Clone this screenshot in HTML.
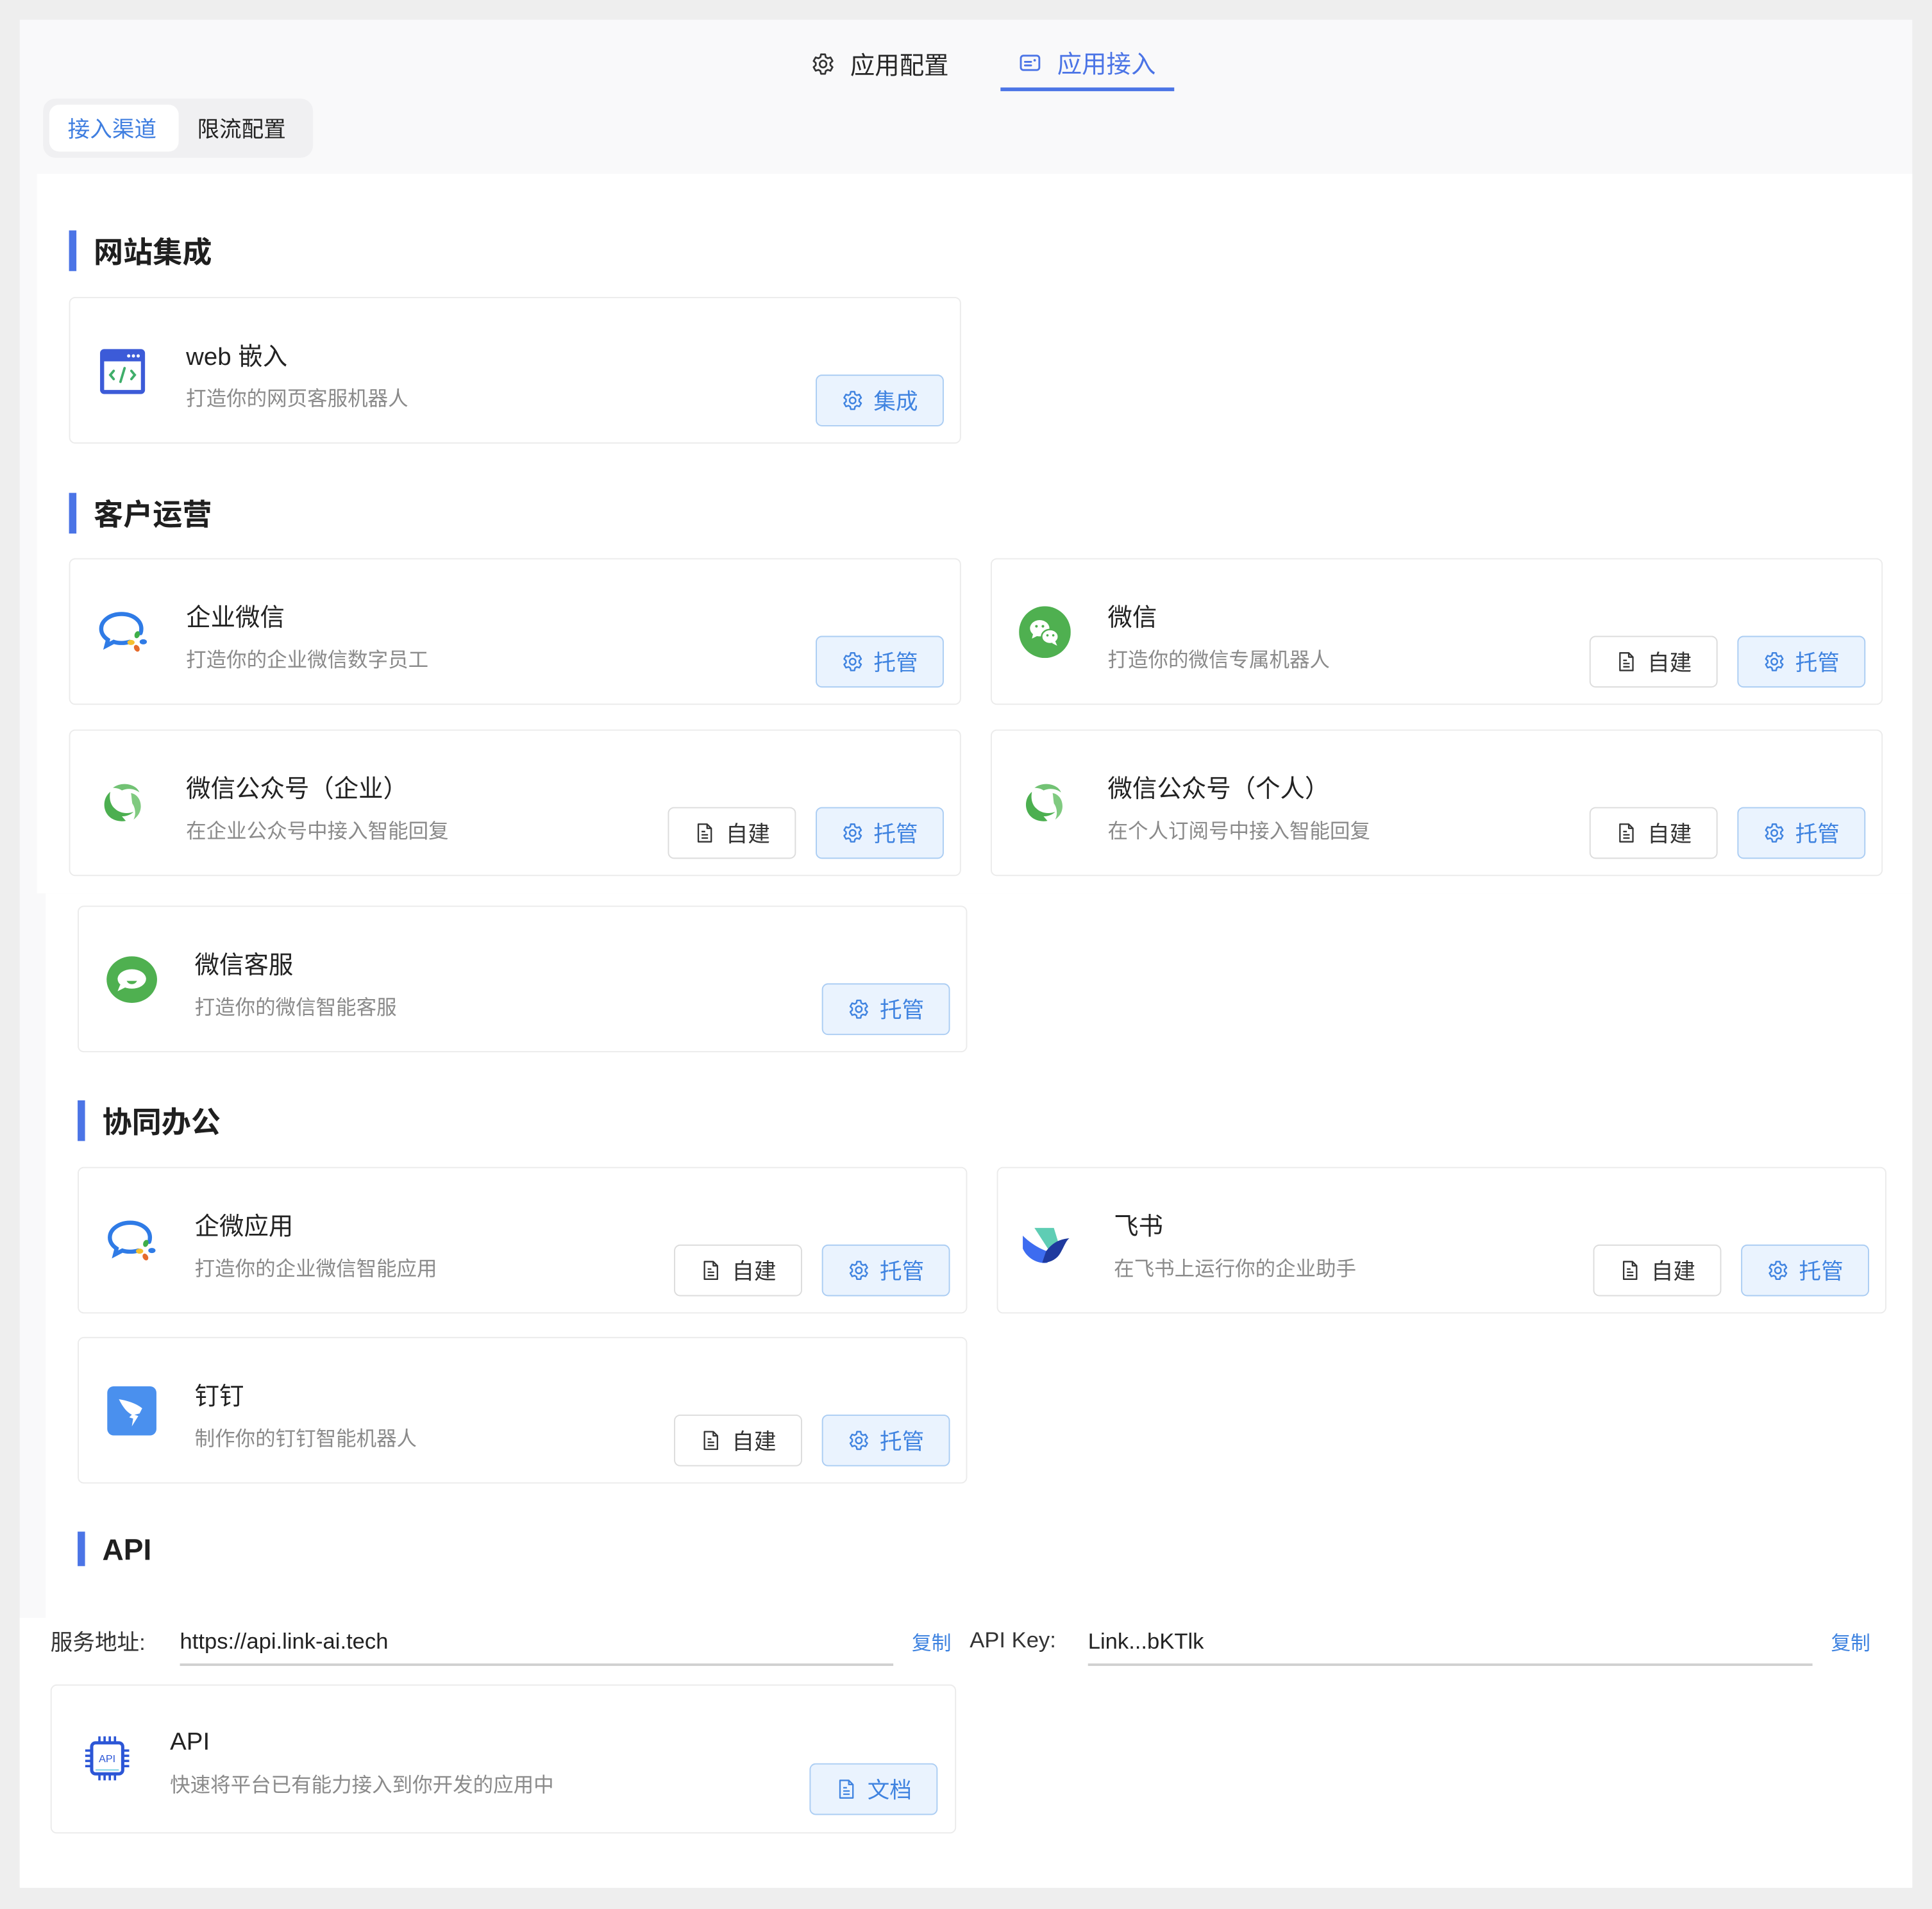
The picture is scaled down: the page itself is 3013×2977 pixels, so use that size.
<!DOCTYPE html>
<html><head><meta charset="utf-8"><style>
html,body{margin:0;padding:0;width:3013px;height:2976px;overflow:hidden;background:#eeeeee;}
*{box-sizing:border-box;}
#s{position:absolute;left:0;top:0;width:1568px;height:1549px;transform:scale(1.92156);transform-origin:0 0;font-family:"Liberation Sans","Noto Sans CJK SC",sans-serif;color:#222;}
.abs{position:absolute;}
.panel{left:16px;top:16px;width:1536px;height:1516px;background:#f9f9fa;}
.white{background:#fff;}
.tab{font-size:20px;display:flex;align-items:center;gap:12px;}
.sec{font-size:24px;font-weight:bold;color:#1f1f1f;}
.bar{width:6px;height:33px;background:#4b74e6;}
.card{background:#fff;border:1px solid #ebebeb;border-radius:5px;width:724px;height:119px;}
.card .ic{position:absolute;left:22px;top:38px;width:42px;height:42px;}
.card .t{position:absolute;left:94px;top:31px;font-size:20px;color:#222;white-space:nowrap;}
.card .d{position:absolute;left:94px;top:68px;font-size:16.4px;color:#8a8a8a;white-space:nowrap;}
.btn{position:absolute;top:62px;width:104px;height:42px;border-radius:5px;font-size:18px;display:flex;align-items:center;justify-content:center;gap:8px;}
.bb{right:13px;background:#eaf3fe;border:1.5px solid #abcdf3;color:#3f83e0;}
.bw{right:133px;background:#fff;border:1.5px solid #dcdcdc;color:#333;}
.lbl{font-size:18px;color:#333;}
</style></head><body><div id="s">
<div class="abs panel"></div>
<div class="abs white" style="left:30px;top:141px;width:1522px;height:584px;"></div>
<div class="abs white" style="left:37px;top:725px;width:1515px;height:588px;"></div>
<div class="abs white" style="left:16px;top:1313px;width:1536px;height:219px;"></div>

<svg width="0" height="0" style="position:absolute"><defs>
<symbol id="gear" viewBox="0 0 24 24"><path fill="none" stroke="currentColor" stroke-width="1.7" stroke-linejoin="round" d="M10 2.5h4l.6 2.8 1.9 1.1 2.7-.9 2 3.5-2.1 1.9v2.2l2.1 1.9-2 3.5-2.7-.9-1.9 1.1-.6 2.8h-4l-.6-2.8-1.9-1.100-2.7.9-2-3.5 2.1-1.9v-2.2L2.8 9l2-3.5 2.7.9 1.9-1.1z"/><circle cx="12" cy="12" r="3.3" fill="none" stroke="currentColor" stroke-width="1.7"/></symbol>
<symbol id="doc" viewBox="0 0 24 24"><path fill="none" stroke="currentColor" stroke-width="1.6" stroke-linejoin="round" d="M5 2.5h9.5l4.5 4.5v14.5H5z M14.5 2.5V7H19 M8.5 10.5h4 M8.5 14h7 M8.5 17.5h7"/></symbol>
<symbol id="wxw" viewBox="0 0 40 40"><path fill="none" stroke="#2f7be6" stroke-width="3.2" stroke-linecap="round" d="M25 27.5c-2 .6-4 .9-6.3.9-2.2 0-4.2-.3-6-.9L7 30.5l1.2-4.6C5 23.8 3 20.8 3 17.5 3 11 10 6 18.7 6S34 11 34 17.5c0 1.2-.2 2.3-.6 3.3"/><ellipse cx="30.8" cy="22" rx="2" ry="2.8" fill="#3fae49" transform="rotate(20 30.8 22)"/><ellipse cx="35.5" cy="27.5" rx="2.8" ry="2" fill="#2f7be6"/><ellipse cx="30.5" cy="32.5" rx="2" ry="2.8" fill="#e66b2c" transform="rotate(-30 30.5 32.5)"/><ellipse cx="26" cy="28" rx="2.8" ry="2" fill="#f4c02f"/></symbol>
<symbol id="gzh" viewBox="0 0 40 40"><path fill="#72c274" d="M12 8c5-4 13-4 18 0 1 1 2 2 2.5 3.5-4-3-9-3.5-13.5-1.5C17 8.5 14 8 12 8z"/><path fill="#80ca80" d="M26 12c6 1 9 8 7 14-1 3-3 5-5 6.5 2-4 1.5-9-1-12.5-.5-3 -.5-5.5-1-8z"/><path fill="#4caf50" d="M10 11C4 16 4 25 9 30c3 3 8 4.5 13 3.5l-3-3.5c4 0 7-1.5 9-3.5-5 2-11 1-14.5-2.5C10 21 9 16 10 11z"/></symbol>
</defs></svg>

<!-- top tabs -->
<div class="abs tab" style="left:658px;top:37px;color:#262626;"><svg width="20" height="20" style="color:#333"><use href="#gear"/></svg><span>应用配置</span></div>
<div class="abs tab" style="left:826px;top:36px;color:#4b74e6;"><svg width="20" height="20" viewBox="0 0 24 24"><rect x="3" y="5" width="18" height="14" rx="2.5" fill="none" stroke="#4b74e6" stroke-width="1.8"/><path d="M7 11h6M7 14.5h6" stroke="#4b74e6" stroke-width="1.8" stroke-linecap="round"/><circle cx="16.5" cy="9.5" r="1.2" fill="#4b74e6"/></svg><span>应用接入</span></div>
<div class="abs" style="left:812px;top:71px;width:141px;height:3px;background:#4b74e6;"></div>

<!-- segmented -->
<div class="abs" style="left:35px;top:80px;width:219px;height:48px;background:#f0f0f2;border-radius:10px;"></div>
<div class="abs" style="left:40px;top:85px;width:105px;height:38px;background:#fff;border-radius:8px;"></div>
<div class="abs" style="left:55px;top:91px;font-size:18px;color:#3f7ee0;">接入渠道</div>
<div class="abs" style="left:160px;top:91px;font-size:18px;color:#222;">限流配置</div>

<!-- 网站集成 -->
<div class="abs bar" style="left:56px;top:187px;"></div>
<div class="abs sec" style="left:76px;top:185px;">网站集成</div>
<div class="abs card" style="left:56px;top:241px;">
 <svg class="ic" viewBox="0 0 38 38"><rect x="2" y="3" width="33" height="33" rx="3" fill="#3c5bd8"/><rect x="5" y="12" width="27" height="21" fill="#fff"/><circle cx="23" cy="8" r="1.2" fill="#fff"/><circle cx="26.5" cy="8" r="1.2" fill="#fff"/><circle cx="30" cy="8" r="1.2" fill="#fff"/><path d="M12 19l-2.5 3 2.5 3M25 19l2.5 3-2.5 3M20 17l-3 10" fill="none" stroke="#3fae6a" stroke-width="1.8" stroke-linecap="round"/></svg>
 <div class="t">web 嵌入</div><div class="d">打造你的网页客服机器人</div>
 <div class="btn bb"><svg width="18" height="18"><use href="#gear"/></svg>集成</div>
</div>

<!-- 客户运营 -->
<div class="abs bar" style="left:56px;top:400px;"></div>
<div class="abs sec" style="left:76px;top:398px;">客户运营</div>
<div class="abs card" style="left:56px;top:453px;">
 <svg class="ic"><use href="#wxw"/></svg>
 <div class="t">企业微信</div><div class="d">打造你的企业微信数字员工</div>
 <div class="btn bb"><svg width="18" height="18"><use href="#gear"/></svg>托管</div>
</div>
<div class="abs card" style="left:804px;top:453px;">
 <svg class="ic" viewBox="0 0 40 40"><circle cx="20" cy="20" r="20" fill="#4fb050"/><ellipse cx="16" cy="17" rx="7.5" ry="6.3" fill="#fff"/><path d="M11 21l-1 4 4-2z" fill="#fff"/><ellipse cx="24" cy="23.5" rx="6.5" ry="5.5" fill="#fff" stroke="#4fb050" stroke-width="1.2"/><path d="M28 27l1.5 3.5-4-2z" fill="#fff"/><circle cx="13.5" cy="15.5" r="1" fill="#4fb050"/><circle cx="18.5" cy="15.5" r="1" fill="#4fb050"/><circle cx="22" cy="22.5" r=".9" fill="#4fb050"/><circle cx="26.5" cy="22.5" r=".9" fill="#4fb050"/></svg>
 <div class="t">微信</div><div class="d">打造你的微信专属机器人</div>
 <div class="btn bw"><svg width="18" height="18"><use href="#doc"/></svg>自建</div>
 <div class="btn bb"><svg width="18" height="18"><use href="#gear"/></svg>托管</div>
</div>
<div class="abs card" style="left:56px;top:592px;">
 <svg class="ic"><use href="#gzh"/></svg>
 <div class="t">微信公众号（企业）</div><div class="d">在企业公众号中接入智能回复</div>
 <div class="btn bw"><svg width="18" height="18"><use href="#doc"/></svg>自建</div>
 <div class="btn bb"><svg width="18" height="18"><use href="#gear"/></svg>托管</div>
</div>
<div class="abs card" style="left:804px;top:592px;">
 <svg class="ic"><use href="#gzh"/></svg>
 <div class="t">微信公众号（个人）</div><div class="d">在个人订阅号中接入智能回复</div>
 <div class="btn bw"><svg width="18" height="18"><use href="#doc"/></svg>自建</div>
 <div class="btn bb"><svg width="18" height="18"><use href="#gear"/></svg>托管</div>
</div>
<div class="abs card" style="left:63px;top:735px;width:722px;">
 <svg class="ic" viewBox="0 0 40 40"><ellipse cx="20" cy="20" rx="19.5" ry="18" fill="#4fb050"/><ellipse cx="20" cy="19.5" rx="11" ry="7.5" fill="#fff"/><path d="M11 24l-2 5 6-3z" fill="#fff"/><path d="M16 21h8c-1 2-2.5 2.5-4 2.5s-3-.5-4-2.5z" fill="#4fb050"/></svg>
 <div class="t">微信客服</div><div class="d">打造你的微信智能客服</div>
 <div class="btn bb"><svg width="18" height="18"><use href="#gear"/></svg>托管</div>
</div>

<!-- 协同办公 -->
<div class="abs bar" style="left:63px;top:893px;"></div>
<div class="abs sec" style="left:83px;top:891px;">协同办公</div>
<div class="abs card" style="left:63px;top:947px;width:722px;">
 <svg class="ic"><use href="#wxw"/></svg>
 <div class="t">企微应用</div><div class="d">打造你的企业微信智能应用</div>
 <div class="btn bw"><svg width="18" height="18"><use href="#doc"/></svg>自建</div>
 <div class="btn bb"><svg width="18" height="18"><use href="#gear"/></svg>托管</div>
</div>
<div class="abs card" style="left:809px;top:947px;width:722px;">
 <svg class="ic" viewBox="0 0 40 40" style="left:18px"><path d="M11 10h15l4 13-8 4z" fill="#5fcdb4"/><path d="M2 16c6 6 14 11 22 13l-3 8C13 38 5 33 2 26z" fill="#3d6cf0"/><path d="M20 28c4-5 8-9 18-10-3 2-5 9-8 13-3 4-8 6-13 6z" fill="#1f3a9e"/></svg>
 <div class="t">飞书</div><div class="d">在飞书上运行你的企业助手</div>
 <div class="btn bw"><svg width="18" height="18"><use href="#doc"/></svg>自建</div>
 <div class="btn bb"><svg width="18" height="18"><use href="#gear"/></svg>托管</div>
</div>
<div class="abs card" style="left:63px;top:1085px;width:722px;">
 <svg class="ic" viewBox="0 0 40 40"><rect x="1" y="1" width="38" height="38" rx="5" fill="#4a90ee"/><path d="M10 11c6 1 13 3 18 7l-2 4-4 1 3 1-5 8 1-6-3-1 2-2c-4-2-7-6-10-12z" fill="#fff"/></svg>
 <div class="t">钉钉</div><div class="d">制作你的钉钉智能机器人</div>
 <div class="btn bw"><svg width="18" height="18"><use href="#doc"/></svg>自建</div>
 <div class="btn bb"><svg width="18" height="18"><use href="#gear"/></svg>托管</div>
</div>

<!-- API -->
<div class="abs bar" style="left:63px;top:1243px;height:28px;"></div>
<div class="abs sec" style="left:83px;top:1245px;">API</div>
<div class="abs lbl" style="left:41px;top:1319px;">服务地址:</div>
<div class="abs lbl" style="left:146px;top:1322px;color:#222;">https://api.link-ai.tech</div>
<div class="abs" style="left:146px;top:1350px;width:579px;height:2px;background:#d0d0d0;"></div>
<div class="abs" style="left:740px;top:1320px;font-size:16px;color:#3f83e0;">复制</div>
<div class="abs lbl" style="left:787px;top:1321px;">API Key:</div>
<div class="abs lbl" style="left:883px;top:1322px;color:#222;">Link...bKTlk</div>
<div class="abs" style="left:883px;top:1350px;width:588px;height:2px;background:#d0d0d0;"></div>
<div class="abs" style="left:1486px;top:1320px;font-size:16px;color:#3f83e0;">复制</div>
<div class="abs card" style="left:41px;top:1367px;width:735px;height:121px;">
 <svg class="ic" viewBox="0 0 40 40" style="left:24px;"><rect x="8" y="8" width="24" height="24" rx="3" fill="#fff" stroke="#2c56d6" stroke-width="2.5"/><path d="M14 8V3M18 8V3M22 8V3M26 8V3M14 32v5M18 32v5M22 32v5M26 32v5M8 14H3M8 18H3M8 22H3M8 26H3M32 14h5M32 18h5M32 22h5M32 26h5" stroke="#2c56d6" stroke-width="1.8"/><path d="M11 29h18" stroke="#8fd8e8" stroke-width="1.2"/><text x="20" y="23" font-size="8" text-anchor="middle" fill="#2c56d6" font-family="Liberation Sans">API</text></svg>
 <div class="t" style="left:96px;top:35px;">API</div><div class="d" style="left:96px;top:67px;">快速将平台已有能力接入到你开发的应用中</div>
 <div class="btn bb" style="top:63px;right:14px;"><svg width="18" height="18"><use href="#doc"/></svg>文档</div>
</div>
</div></body></html>
